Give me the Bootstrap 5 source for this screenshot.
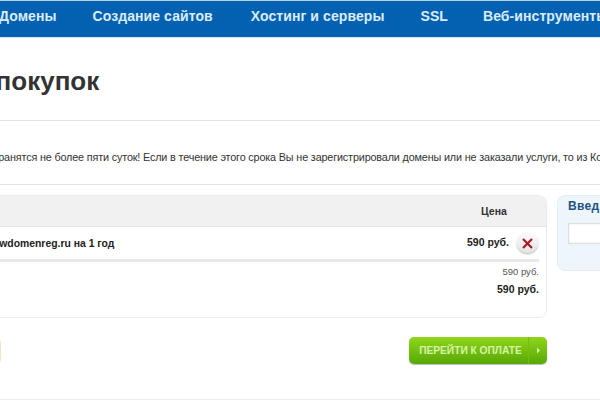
<!DOCTYPE html>
<html lang="ru">
<head>
<meta charset="utf-8">
<title>Корзина покупок</title>
<link href="https://cdn.jsdelivr.net/npm/bootstrap@5.3.0/dist/css/bootstrap.min.css" rel="stylesheet">
<style>
html,body{width:600px;height:400px;overflow:hidden;background:#fff}
body{font-family:"Liberation Sans",Arial,sans-serif;color:#222;font-size:11px}
.page-crop{width:1200px;margin-left:-220px;height:400px;border-bottom:1px solid #e8ebf5}
.top-bar{height:38px;background:#0461b1;border-top:1px solid #b9cfe2;border-bottom:1px solid #cfeaf9;padding-left:220px;gap:36px;align-items:center}
.top-bar a{color:#d9edf9;font-weight:700;font-size:14px;letter-spacing:.08px;text-decoration:none;white-space:nowrap;padding-bottom:6px}
.top-bar a.first-link{margin-left:-1px}
.top-bar a.host-link{margin-left:2px}
.top-bar a.ssl-link{letter-spacing:.1px}
.top-bar a.tools-link{margin-left:-1px}
.title-zone{height:83px;border-bottom:1px solid #e3e3e3;width:1200px;padding-top:27px}
.title-zone h1{font-size:26px;font-weight:700;color:#333;margin:0;padding-left:102px;line-height:32px}
.note-zone{height:64px;border-bottom:1px solid #e3e3e3;white-space:nowrap;padding-left:124px;padding-top:29px;font-size:10.8px;letter-spacing:-.15px;line-height:14px;color:#333}
.cols{margin-top:10px;gap:10px}
.basket-box{width:767px;height:123px;border:1px solid #ececec;border-radius:8px;background:#fff}
.basket-head{height:31px;background:#f1f1f1;border-bottom:1px solid #e5e5e5;border-radius:7px 7px 0 0;padding-top:9px;font-weight:700;color:#333;font-size:10.5px;line-height:13px}
.price-cap{width:59px;margin-right:6px}
.basket-line{height:35px;margin-right:7px;border-bottom:3px solid #e8e8e8;padding-left:97px;font-weight:700;font-size:10.4px;color:#222}
.line-name{padding-top:1px}
.line-price{font-size:10.5px}
.del-btn{width:21px;height:20px;border-radius:50%;background:linear-gradient(#fbfbfb,#e3e3e3);box-shadow:0 1px 2px #aaa;margin-left:8px;margin-right:1px}
.sums{margin-right:7px;text-align:right;padding-top:3px}
.sum-small{font-size:9.5px;color:#555;line-height:14px}
.sum-big{font-size:10.5px;font-weight:700;line-height:14px;margin-top:3px;color:#222}
.promo-box{width:200px;height:76px;background:#eef5fb;border:1px solid #e2edf6;border-radius:8px;padding:0 11px 0 10px}
.promo-cap{color:#1f5283;font-weight:700;font-size:12px;line-height:14px;padding-top:3px;letter-spacing:.3px}
.promo-field{height:21px;margin-top:10px;background:#fff;border:1px solid #dfdfdf;box-shadow:inset 0 0 2px #ddd}
.actions{width:767px;margin-top:19px;height:27px}
.orange-go{width:221px;height:24px;background:#fbe3c8;border-radius:4px}
.pay-btn{width:138px;height:27px;border-radius:5px;background:linear-gradient(#8fd61b,#57a806);color:#d9f2a9;font-weight:700;font-size:10.2px;box-shadow:0 1px 1px #bbb;overflow:hidden}
.pay-text{flex:1;text-align:center;padding-left:4px;white-space:nowrap}
.pay-arrow{width:19px;height:100%;border-left:1px solid #76bb10}
</style>
</head>
<body>
<div class="page-crop">
  <nav class="top-bar d-flex">
    <a class="first-link" href="#">Домены</a>
    <a href="#">Создание сайтов</a>
    <a class="host-link" href="#">Хостинг и серверы</a>
    <a class="ssl-link" href="#">SSL</a>
    <a class="tools-link" href="#">Веб-инструменты</a>
  </nav>
  <div class="title-zone"><h1>Корзина покупок</h1></div>
  <div class="note-zone">Товары в корзине хранятся не более пяти суток! Если в течение этого срока Вы не зарегистрировали домены или не заказали услуги, то из Корзины они будут удалены.</div>
  <div class="cols d-flex align-items-start">
    <div>
      <div class="basket-box">
        <div class="basket-head d-flex justify-content-end"><span class="price-cap">Цена</span></div>
        <div class="basket-line d-flex align-items-center justify-content-between">
          <span class="line-name">Регистрация домена newdomenreg.ru на 1 год</span>
          <span class="d-flex align-items-center"><span class="line-price">590 руб.</span>
            <span class="del-btn d-flex align-items-center justify-content-center">
              <svg width="11" height="11" viewBox="0 0 11 11"><path d="M1 1l9 9M10 1l-9 9" stroke="#a51c26" stroke-width="2.2" fill="none"/></svg>
            </span>
          </span>
        </div>
        <div class="sums">
          <div class="sum-small">590 руб.</div>
          <div class="sum-big">590 руб.</div>
        </div>
      </div>
      <div class="actions d-flex justify-content-between align-items-center">
        <span class="orange-go"></span>
        <a class="pay-btn d-flex align-items-center text-decoration-none" href="#">
          <span class="pay-text">ПЕРЕЙТИ К ОПЛАТЕ</span>
          <span class="pay-arrow d-flex align-items-center justify-content-center">
            <svg width="5" height="7" viewBox="0 0 5 7"><path d="M1 .5l3 3-3 3z" fill="#d9f2a9"/></svg>
          </span>
        </a>
      </div>
    </div>
    <div class="promo-box">
      <div class="promo-cap">Введите промокод</div>
      <div class="promo-field"></div>
    </div>
  </div>
</div>
<script src="https://cdn.jsdelivr.net/npm/bootstrap@5.3.0/dist/js/bootstrap.bundle.min.js"></script>
</body>
</html>
